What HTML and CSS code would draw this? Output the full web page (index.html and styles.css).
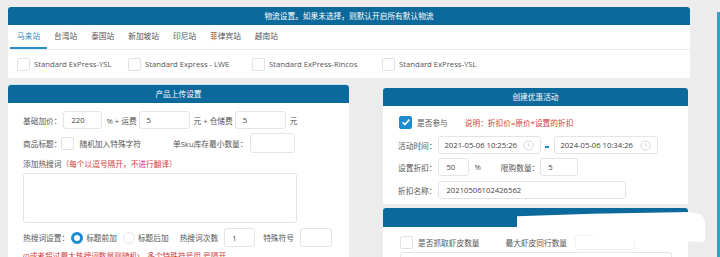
FILE: index.html
```html
<!DOCTYPE html>
<html>
<head>
    <title>商品上传设置</title>
    <link rel="stylesheet" href="styles.css">
</head>
<body>
<div class="page">
    <div class="main">
        <div class="panel ship">
            <div class="panel-head">物流设置。如果未选择，则默认开启所有默认物流</div>
            <div class="tabs">
                <span class="tab active">马来站</span>
                <span class="tab">台湾站</span>
                <span class="tab">泰国站</span>
                <span class="tab">新加坡站</span>
                <span class="tab">印尼站</span>
                <span class="tab">菲律宾站</span>
                <span class="tab">越南站</span>
            </div>
            <div class="ship-list">
                <label class="ship-item w1"><span class="box"></span>Standard ExPress-YSL</label>
                <label class="ship-item w2"><span class="box"></span>Standard Express - LWE</label>
                <label class="ship-item w3"><span class="box"></span>Standard ExPress-Rincos</label>
                <label class="ship-item"><span class="box"></span>Standard ExPress-YSL</label>
            </div>
        </div>

        <div class="cols">
            <div class="panel upload">
                <div class="panel-head">产品上传设置</div>
                <div class="upload-body">
                    <div class="row r1">
                        <span>基础加价：</span>
                        <span class="input w-39">220</span>
                        <span class="txt">% + 运费</span>
                        <span class="input w-51">5</span>
                        <span class="txt">元 + 仓储费</span>
                        <span class="input w-51">5</span>
                        <span class="txt">元</span>
                    </div>
                    <div class="row r2">
                        <span>商品标题：</span>
                        <span class="box"></span>
                        <span class="after-box">随机加入特殊字符</span>
                        <span class="sku-label">单Sku库存最小数量：</span>
                        <span class="input w-45 h-20"></span>
                    </div>
                    <div class="row r3">添加热搜词<span class="red">（每个以逗号隔开，不进行翻译）</span></div>
                    <div class="textarea"></div>
                    <div class="row r5">
                        <span>热搜词设置：</span>
                        <span class="radio on"></span>
                        <span class="radio-txt">标题前加</span>
                        <span class="radio"></span>
                        <span class="radio-txt">标题后加</span>
                        <span class="gap-l">热搜词次数</span>
                        <span class="input w-31 h-19">1</span>
                        <span class="gap-m">特殊符号</span>
                        <span class="input w-32 h-19"></span>
                    </div>
                    <div class="row r6 red">(0或者超过最大热搜词数量则随机)，多个特殊符号用,号隔开</div>
                </div>
            </div>

            <div class="side">
                <div class="panel promo">
                    <div class="panel-head">创建优惠活动</div>
                    <div class="promo-body">
                        <div class="row p1">
                            <span class="box checked">
                                <svg width="12" height="12" viewBox="0 0 12 12"><path d="M2.6 6.2l2.3 2.3 4.5-4.9" fill="none" stroke="#fff" stroke-width="1.6"/></svg>
                            </span>
                            <span class="after-box">是否参与</span>
                            <span class="red note">说明：折扣价=原价*设置的折扣</span>
                        </div>
                        <div class="row p2">
                            <span>活动时间：</span>
                            <span class="input date w-103">2021-05-06 10:25:26
                                <svg class="clock" width="11" height="11" viewBox="0 0 11 11"><circle cx="5.5" cy="5.5" r="4.6" fill="none" stroke="#d6d6d6" stroke-width="1"/><path d="M5.5 3v2.7l1.8 1.1" fill="none" stroke="#d6d6d6" stroke-width="1"/></svg>
                            </span>
                            <span class="dash"></span>
                            <span class="input date w-104">2024-05-06 10:34:26
                                <svg class="clock" width="11" height="11" viewBox="0 0 11 11"><circle cx="5.5" cy="5.5" r="4.6" fill="none" stroke="#d6d6d6" stroke-width="1"/><path d="M5.5 3v2.7l1.8 1.1" fill="none" stroke="#d6d6d6" stroke-width="1"/></svg>
                            </span>
                        </div>
                        <div class="row p3">
                            <span>设置折扣：</span>
                            <span class="input w-31">50</span>
                            <span class="pct">%</span>
                            <span>限购数量：</span>
                            <span class="input w-38">5</span>
                        </div>
                        <div class="row p4">
                            <span>折扣名称：</span>
                            <span class="input w-188">20210506102426562</span>
                        </div>
                    </div>
                </div>

                <div class="panel grab">
                    <div class="panel-head"></div>
                    <div class="grab-body">
                        <div class="row g1">
                            <span class="box"></span>
                            <span class="after-box">是否抓取虾皮数量</span>
                            <span class="max-label">最大虾皮同行数量</span>
                            <span class="input w-60 h-15"></span>
                        </div>
                        <div class="input wide"></div>
                    </div>
                    <!-- redacted area of the screenshot -->
                    <div class="blot"></div>
                </div>
            </div>
        </div>
    </div>
    <div class="edge"></div>
</div>
</body>
</html>
```

FILE: styles.css
```css
html, body { margin: 0; height: 100%; overflow: hidden; }
body {
    background: #ececec;
    font-family: "Open Sans", "Noto Sans CJK SC", sans-serif;
    font-size: 7.7px;
    color: #555;
}
.page { display: flex; padding: 7px 0 0 8px; height: 100%; box-sizing: border-box; }
.main { width: 682px; flex: none; }
.edge { flex: none; width: 3px; margin: 5px 0 0 27px; background: #3c9ec6; }

.panel { background: #fff; border-radius: 3px 3px 0 0; }
.panel-head {
    background: #0b6a9b;
    color: #fff;
    height: 18px;
    line-height: 18px;
    text-align: center;
    border-radius: 3px 3px 0 0;
}
.red { color: #d23a3a; }

.box {
    display: inline-block;
    width: 11px;
    height: 11px;
    border: 1px solid #e2e2e2;
    border-radius: 2px;
    background: #fff;
    flex: none;
}
.box.checked { background: #1e8bd0; border-color: #1e8bd0; }
.box.checked svg { display: block; margin: -0.5px; }

.input {
    display: inline-flex;
    align-items: center;
    box-sizing: border-box;
    height: 18px;
    padding-left: 7px;
    border: 1px solid #e4e4e4;
    border-radius: 3px;
    background: #fff;
    color: #444;
    flex: none;
}

/* shipping */
.tabs { display: flex; height: 24px; padding-left: 2px; border-bottom: 1px solid #eee; }
.tab { padding: 0 7px; line-height: 22px; color: #555; }
.tab.active { color: #2a8cc4; border-bottom: 2px solid #2a8cc4; }
.ship-list { display: flex; align-items: center; height: 28px; padding-left: 9px; }
.ship-item { display: flex; align-items: center; gap: 4px; }
.ship-item.w1 { width: 111px; }
.ship-item.w2 { width: 124px; }
.ship-item.w3 { width: 130px; }

.cols { display: flex; align-items: flex-start; margin-top: 7px; }
.upload { width: 341px; height: 200px; box-shadow: 0 -1px 0 #c6e6ef; }
.side { width: 305px; margin: 3px 0 0 34px; }

.row { display: flex; align-items: center; }

/* upload settings */
.upload-body { padding: 8px 0 0 15px; }
.r1 { height: 18px; }
.r1 .input { margin-left: 2px; }
.r1 .txt { margin-left: 4px; }
.r1 .txt + .input { margin-left: 2px; }
.r2 { height: 20px; margin-top: 4px; }
.after-box { margin-left: 5px; }
.sku-label { margin-left: 32px; }
.r2 .input { margin-left: 3px; }
.r3 { height: 16px; margin-top: 2px; }
.textarea {
    width: 274px;
    height: 50px;
    margin-top: 2px;
    border: 1px solid #e4e4e4;
    border-radius: 3px;
    box-sizing: border-box;
}
.r5 { height: 19px; margin-top: 5px; }
.radio {
    width: 12px;
    height: 12px;
    box-sizing: border-box;
    border-radius: 50%;
    border: 1px solid #e6e6e6;
    margin-left: 2px;
    flex: none;
}
.radio.on { border: 3.5px solid #1e8bd0; }
.radio-txt { margin-left: 3px; }
.radio-txt + .radio { margin-left: 6px; }
.gap-l { margin-left: 11px; }
.r5 .input { margin-left: 6px; }
.gap-m { margin-left: 8px; }
.r6 { margin-top: 3px; line-height: 12px; }

.w-31 { width: 31px; }
.w-32 { width: 32px; }
.w-38 { width: 38px; }
.w-39 { width: 39px; }
.w-45 { width: 45px; }
.w-51 { width: 51px; }
.w-60 { width: 60px; }
.w-103 { width: 103px; }
.w-104 { width: 104px; }
.w-188 { width: 188px; }
.h-15 { height: 15px; }
.h-19 { height: 19px; }
.h-20 { height: 20px; }

/* promo */
.promo-body { padding: 9px 0 5px 15px; }
.p1 { height: 14px; padding-left: 1px; }
.note { margin-left: 17px; }
.p2 { height: 18px; margin-top: 7px; }
.p2 .input, .p3 .input, .p4 .input { margin-left: 2px; }
.date { justify-content: space-between; padding: 0 6px 0 5px; }
.clock { display: block; }
.dash { width: 4px; height: 2px; background: #1e8bd0; margin: 3px 3px 0 4px; }
.p3 { height: 18px; margin-top: 4px; }
.pct { margin: 0 20px 0 5px; }
.p3 .input.w-38 { margin-left: 1px; }
.p4 { height: 18px; margin-top: 5px; }

/* grab */
.grab { position: relative; margin-top: 4px; height: 60px; }
.grab .panel-head { height: 19px; }
.grab-body { padding: 8px 0 0 17px; }
.g1 { height: 15px; }
.max-label { margin-left: 26px; }
.g1 .input { margin-left: 8px; border-color: #f2f2f2; }
.wide { width: 272px; height: 14px; margin-top: 2px; }
.blot {
    position: absolute;
    z-index: 1;
    left: 134px;
    top: 4px;
    width: 188px;
    height: 30px;
    background: #fff;
    border-radius: 0 8px 4px 0;
    clip-path: polygon(0 14%, 40% 6%, 92% 0, 98% 8%, 100% 30%, 100% 100%, 72% 94%, 45% 80%, 18% 68%, 0 52%);
}
```
